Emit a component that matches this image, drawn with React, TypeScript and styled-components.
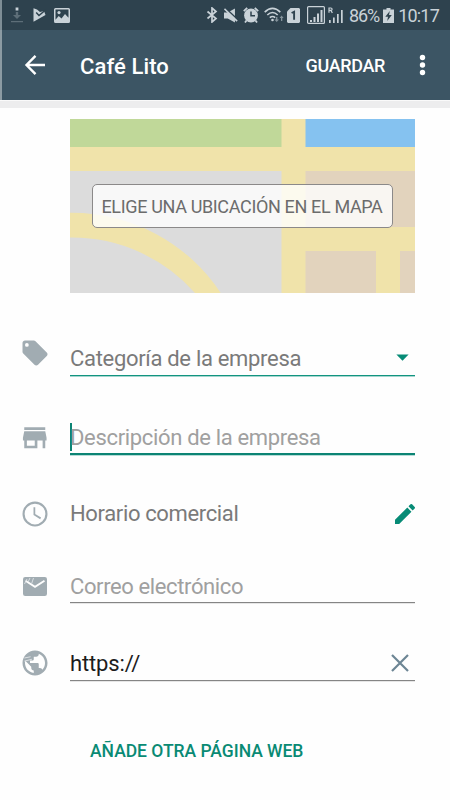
import React from 'react';
import styled, { createGlobalStyle } from 'styled-components';

const GlobalStyle = createGlobalStyle`
  * { box-sizing: border-box; }
  body { margin: 0; background: #fefefe; font-family: Roboto, "Liberation Sans", sans-serif; }
`;

const Screen = styled.main`
  width: 450px;
  height: 800px;
  overflow: hidden;
  background: #fefefe;
`;

const StatusBar = styled.header`
  display: flex;
  align-items: center;
  justify-content: space-between;
  height: 30px;
  padding: 0 11px 0 9px;
  border-left: 2px solid #7f8e96;
  background: #2e424e;
  color: #c9d2d8;
`;

const StatusSide = styled.div`
  display: flex;
  align-items: center;
  height: 30px;
`;

const StatusText = styled.span<{ $left: number; $spacing: number }>`
  margin-left: ${(p) => p.$left}px;
  padding-top: 2px;
  font-size: 18px;
  line-height: 20px;
  letter-spacing: ${(p) => p.$spacing}px;
  white-space: nowrap;
`;

const AppBar = styled.nav`
  display: flex;
  align-items: center;
  height: 70px;
  padding-left: 21px;
  border-left: 2px solid #8c9ba3;
  background: #3c5564;
  color: #fff;
`;

const Title = styled.h1`
  flex: 1;
  margin: 3px 0 0 31px;
  font-size: 22px;
  font-weight: 500;
  line-height: 30px;
  letter-spacing: 0.1px;
`;

const SaveButton = styled.button`
  margin: 2px 29px 0 0;
  padding: 0;
  border: 0;
  background: none;
  color: #fff;
  font: 500 18px/26px Roboto, sans-serif;
  letter-spacing: -0.35px;
`;

const BarShadow = styled.div`
  height: 8px;
  border-top: 1px solid #fafafa;
  background: #ededee;
`;

const Glyph = styled.svg<{ $w: number; $h: number; $left?: number; $top?: number }>`
  display: block;
  flex: none;
  width: ${(p) => p.$w}px;
  height: ${(p) => p.$h}px;
  margin-left: ${(p) => p.$left ?? 0}px;
  margin-top: ${(p) => p.$top ?? 0}px;
  fill: currentColor;
`;

const MapCard = styled.section`
  display: grid;
  width: 345px;
  height: 174px;
  margin: 11px 0 0 70px;
  place-items: center;

  & > * { grid-area: 1 / 1; }
`;

const MapButton = styled.button`
  width: 301px;
  height: 44px;
  margin: 0 1px 0 0;
  padding: 2px 0 0;
  border: 1px solid #8b8989;
  border-radius: 5px;
  background: rgba(255, 255, 255, 0.8);
  color: #6c6c6c;
  font: 400 18px/26px Roboto, sans-serif;
  letter-spacing: -0.35px;
  white-space: nowrap;
`;

const Row = styled.div<{ $gap: number }>`
  display: grid;
  grid-template-columns: 70px 345px;
  height: 35px;
  margin-top: ${(p) => p.$gap}px;
`;

const IconCell = styled.div<{ $shift: number }>`
  display: flex;
  align-items: center;
  justify-content: center;
  height: 36px;
  margin-top: ${(p) => p.$shift}px;
  color: #a1acb2;
`;

const Field = styled.div<{ $line: string; $weight: number; $soft?: string }>`
  display: flex;
  align-items: center;
  justify-content: space-between;
  height: 35px;
  padding-top: 1px;
  border-bottom: ${(p) => p.$weight}px solid ${(p) => p.$line};
  box-shadow: 0 1px 0 ${(p) => p.$soft ?? 'transparent'};
  color: #078b76;
`;

const Label = styled.span<{ $color: string; $spacing: number; $drop?: number }>`
  padding-top: ${(p) => p.$drop ?? 0}px;
  color: ${(p) => p.$color};
  font-size: 22px;
  line-height: 30px;
  letter-spacing: ${(p) => p.$spacing}px;
  white-space: nowrap;
`;

const Caret = styled.span`
  width: 2px;
  height: 28px;
  margin: 0 -2px 0 0;
  background: #0c8474;
`;

const Editing = styled.div`
  display: flex;
  align-items: center;
`;

const AddLink = styled.button`
  display: block;
  margin: 57px 0 0 90px;
  padding: 0;
  border: 0;
  background: none;
  color: #098a74;
  font: 500 17.5px/26px Roboto, sans-serif;
  letter-spacing: -0.02px;
  white-space: nowrap;
`;

export default function App() {
  return (
    <Screen>
      <GlobalStyle />
      <StatusBar>
        <StatusSide>
          <Glyph $w={12} $h={16} viewBox="0 0 12 16">
            <path fill="#5d6e78" d="M4.800 5h2.400v3H10l-4 4-4-4h2.800zM0 14h12v1.300H0z" />
            <path d="M4.600.500h2.800v3H4.600z" />
          </Glyph>
          <Glyph $w={13} $h={14} $left={10} viewBox="0 0 13 14">
            <path d="M.5.300 4 1.500 7 4l4-1 1.500 4L.5 13.700z" />
            <path d="m3.200 4.500 2.800 3 6.500-5.500" fill="none" stroke="#2e424e" strokeWidth="1.500" />
          </Glyph>
          <Glyph $w={16} $h={15} $left={8} viewBox="0 0 16 15">
            <path fillRule="evenodd" d="M1.500 0h13A1.500 1.500 0 0 1 16 1.500v12a1.500 1.500 0 0 1-1.500 1.500h-13A1.500 1.500 0 0 1 0 13.500v-12A1.500 1.500 0 0 1 1.500 0zm0 1.500v10.200L4.700 8l2.800 2.500L11 6l3.500 3.800V1.500z" />
            <circle cx="5" cy="4.600" r="1.600" />
          </Glyph>
        </StatusSide>
        <StatusSide>
          <Glyph $w={12} $h={16} viewBox="0 0 12 16">
            <path d="m1.500 4.500 8.500 7L6 15V1l4 3.500-8.500 7" fill="none" stroke="currentColor" strokeWidth="1.700" />
          </Glyph>
          <Glyph $w={14} $h={15} $left={6} viewBox="0 0 16 16">
            <path d="M0 4.500h4.300L12.500 0v16l-8.200-4.500H0z" />
            <path d="m1.500-.5 15 14" stroke="#2e424e" strokeWidth="1.800" />
            <path d="m.5.500 14.500 14" stroke="currentColor" strokeWidth="1.800" />
          </Glyph>
          <Glyph $w={16} $h={16} $left={5} viewBox="0 0 16 16">
            <circle cx="8" cy="8.500" r="6.900" />
            <path d="M.8 4.200 4.200.8M11.800.8l3.400 3.400M3.500 13.500 2 15.500M12.500 13.500l1.500 2" stroke="currentColor" strokeWidth="1.800" />
            <path d="M8 4.500v4.300h4" fill="none" stroke="#2e424e" strokeWidth="1.500" />
          </Glyph>
          <Glyph $w={20} $h={16} $left={5} viewBox="0 0 20 16">
            <g fill="none" stroke="currentColor" strokeWidth="1.600">
              <path d="M.7 5.200Q8.500-2.300 16.300 5.200M3.300 8Q8.500 3 13.700 8M5.800 10.700q2.700-2.400 5.400 0" />
            </g>
            <circle cx="8.500" cy="13" r="1.300" />
            <path fill="#84939c" d="M12 10h1.400v2.500H15L12.700 15l-2.300-2.500H12zM17 14h1.300v-3h1.300l-2-2.500-2 2.500H17z" />
          </Glyph>
          <Glyph $w={13} $h={15} $left={3} viewBox="0 0 13 15">
            <path d="M3.500 0H12l1 1v13l-1 1H1l-1-1V3.500z" />
            <path d="m4.600 5 2.500-1.300v8" fill="none" stroke="#2e424e" strokeWidth="1.900" />
          </Glyph>
          <Glyph $w={18} $h={18} $left={7} viewBox="0 0 18 18">
            <rect x=".6" y=".6" width="16.800" height="16.800" rx="1" fill="none" stroke="currentColor" strokeWidth="1.200" />
            <path d="M3 14h2v2H3zM6.500 11h2v5h-2zM10 7.500h2V16h-2zM13.500 4h2v12h-2z" />
          </Glyph>
          <Glyph $w={15} $h={17} $left={3} viewBox="0 0 15 17">
            <path d="M1 5.800V1h1.800q1.300 0 1.300 1.200T2.800 3.400H1m1.800 0 1.600 2.400" fill="none" stroke="currentColor" strokeWidth="1.200" />
            <path d="M1 13h1.700v3H1zM5 10.500h1.700V16H5zM9 7h1.700v9H9zM13 3h1.700v13H13z" />
          </Glyph>
          <StatusText $left={6} $spacing={-1.1}>86%</StatusText>
          <Glyph $w={11} $h={15} $left={4} viewBox="0 0 11 15">
            <path d="M3.500 0h4v1.500H11V15H0V1.500h3.500z" />
            <path fill="#2e424e" d="M6.800 3 2.300 8.700H5L4.200 13l4.600-6H6z" />
          </Glyph>
          <StatusText $left={4} $spacing={-0.8}>10:17</StatusText>
        </StatusSide>
      </StatusBar>
      <AppBar>
        <Glyph $w={26} $h={24} viewBox="0 0 26 24">
          <path d="M22 12H4M12.500 2.800 3.500 12l9 9.200" fill="none" stroke="currentColor" strokeWidth="2.400" />
        </Glyph>
        <Title>Café Lito</Title>
        <SaveButton>GUARDAR</SaveButton>
        <Glyph $w={36} $h={22} viewBox="0 0 36 22">
          <circle cx="8.500" cy="3.500" r="2.700" />
          <circle cx="8.500" cy="11" r="2.700" />
          <circle cx="8.500" cy="18.500" r="2.700" />
        </Glyph>
      </AppBar>
      <BarShadow />

      <MapCard>
        <Glyph $w={345} $h={174} viewBox="0 0 345 174">
          <path fill="#f0e3aa" d="M0 0h345v174H0z" />
          <path fill="#c0d899" d="M0 0h211.500v28H0z" />
          <path fill="#85c2f0" d="M235.500 0H345v28H235.500z" />
          <path fill="#dcdcdc" d="M0 52h211.500v122H150.700A178.500 178.500 0 0 0 2 93.700H0z" />
          <path fill="#dcdcdc" d="M0 118.600h2A164 164 0 0 1 125 174H0z" />
          <path fill="#e2d3bd" d="M235.500 52H345v56H235.500zM235.500 132H306v42h-70.500zM330 132h15v42h-15z" />
        </Glyph>
        <MapButton>ELIGE UNA UBICACIÓN EN EL MAPA</MapButton>
      </MapCard>

      <Row $gap={48}>
        <IconCell $shift={-6}>
          <Glyph $w={30} $h={30} viewBox="0 0 24 24">
            <path d="m21.400 11.600-9-9C12.050 2.220 11.550 2 11 2H4c-1.100 0-2 .9-2 2v7c0 .55.22 1.050.59 1.420l9 9c.36.36.86.58 1.410.58s1.050-.22 1.410-.59l7-7c.37-.36.59-.86.59-1.410s-.23-1.060-.6-1.400zM5.500 7a1.500 1.500 0 1 1 0-3 1.500 1.500 0 0 1 0 3z" />
          </Glyph>
        </IconCell>
        <Field $line="#129480" $weight={1} $soft="#a5d6cf">
          <Label $color="#7a7a7a" $spacing={-0.31}>Categoría de la empresa</Label>
          <Glyph $w={19} $h={7} $top={-3} viewBox="0 0 19 7"><path d="M.4.500h12.200l-6.100 6.300z" /></Glyph>
        </Field>
      </Row>

      <Row $gap={44}>
        <IconCell $shift={0}>
          <Glyph $w={31.5} $h={31.5} viewBox="0 0 24 24">
            <path d="M20 4H4v2h16V4zm1 10v-2l-1-5H4l-1 5v2h1v6h10v-6h4v6h2v-6h1zm-9 4H6v-4h6v4z" />
          </Glyph>
        </IconCell>
        <Field $line="#0c8474" $weight={2} $soft="#b5dcd7">
          <Editing>
            <Caret />
            <Label $color="#a0a0a0" $spacing={-0.33} $drop={2}>Descripción de la empresa</Label>
          </Editing>
        </Field>
      </Row>

      <Row $gap={41}>
        <IconCell $shift={0}>
          <Glyph $w={30} $h={30} viewBox="0 0 24 24">
            <circle cx="12" cy="12" r="9.150" fill="none" stroke="currentColor" strokeWidth="1.700" />
            <path d="M11.500 6.500v6l5 3" fill="none" stroke="currentColor" strokeWidth="1.400" />
          </Glyph>
        </IconCell>
        <Field $line="transparent" $weight={0}>
          <Label $color="#7a7a7a" $spacing={-0.36}>Horario comercial</Label>
          <Glyph $w={20} $h={20} $top={-1} viewBox="3 3 18 18">
            <path d="M3 17.250V21h3.750L17.810 9.940l-3.750-3.750L3 17.250zM20.710 7.040a1 1 0 0 0 0-1.410l-2.340-2.340a1 1 0 0 0-1.410 0l-1.830 1.830 3.750 3.750 1.830-1.830z" />
          </Glyph>
        </Field>
      </Row>

      <Row $gap={37}>
        <IconCell $shift={0}>
          <Glyph $w={24} $h={19} viewBox="0 0 24 19">
            <rect width="24" height="19" rx="2.200" />
            <path d="m2.500 3.800 9.500 6 9.500-6" fill="none" stroke="#fefefe" strokeWidth="1.900" />
            <path d="M5 5 7 1M8.500 7l2-6M1.500 7 4 2" stroke="#dfe3e6" strokeWidth=".9" />
          </Glyph>
        </IconCell>
        <Field $line="#858585" $weight={1} $soft="#e6e6e6">
          <Label $color="#a0a0a0" $spacing={-0.38} $drop={2}>Correo electrónico</Label>
        </Field>
      </Row>

      <Row $gap={43}>
        <IconCell $shift={-1}>
          <Glyph $w={30} $h={30} viewBox="0 0 24 24">
            <path d="M12 2C6.480 2 2 6.480 2 12s4.480 10 10 10 10-4.480 10-10S17.520 2 12 2zm-1 17.930c-3.950-.49-7-3.850-7-7.930 0-.62.080-1.210.210-1.790L9 15v1c0 1.100.9 2 2 2v1.930zm6.900-2.540c-.26-.81-1-1.390-1.900-1.390h-1v-3c0-.55-.45-1-1-1H8v-2h2c.55 0 1-.45 1-1V7h2c1.100 0 2-.9 2-2v-.41c2.930 1.190 5 4.060 5 7.410 0 2.080-.8 3.970-2.100 5.390z" />
            <path d="m3.500 8 5-1M3.500 10.500l6-1.500" stroke="#dde1e4" strokeWidth=".8" />
          </Glyph>
        </IconCell>
        <Field $line="#858585" $weight={1} $soft="#e6e6e6">
          <Label $color="#1c1c1c" $spacing={-0.15}>https://</Label>
          <Glyph $w={24} $h={18} $top={-1} viewBox="0 0 24 18">
            <path d="m1 1 16 16M17 1 1 17" fill="none" stroke="#6c8594" strokeWidth="2.200" />
          </Glyph>
        </Field>
      </Row>

      <AddLink>AÑADE OTRA PÁGINA WEB</AddLink>
    </Screen>
  );
}
